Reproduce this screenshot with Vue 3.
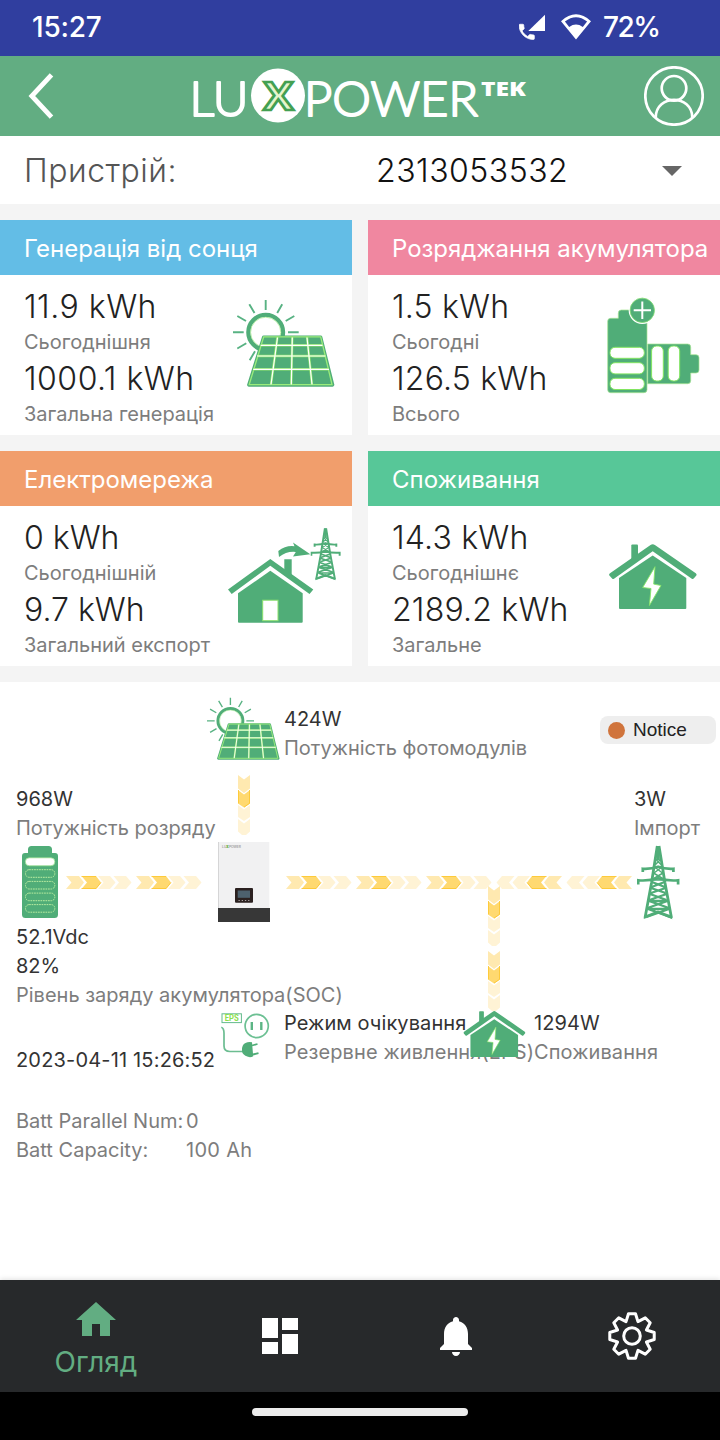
<script setup>
const device = '2313053532'

const cards = [
  {
    id: 'solar',
    title: 'Генерація від сонця',
    today: '11.9 kWh',
    todayLabel: 'Сьогоднішня',
    total: '1000.1 kWh',
    totalLabel: 'Загальна генерація',
  },
  {
    id: 'battery',
    title: 'Розряджання акумулятора',
    today: '1.5 kWh',
    todayLabel: 'Сьогодні',
    total: '126.5 kWh',
    totalLabel: 'Всього',
  },
  {
    id: 'grid',
    title: 'Електромережа',
    today: '0 kWh',
    todayLabel: 'Сьогоднішній',
    total: '9.7 kWh',
    totalLabel: 'Загальний експорт',
  },
  {
    id: 'load',
    title: 'Споживання',
    today: '14.3 kWh',
    todayLabel: 'Сьогоднішнє',
    total: '2189.2 kWh',
    totalLabel: 'Загальне',
  },
]

const viewBoxes = {
  solar: '0 0 102 88',
  battery: '0 0 93 97',
  grid: '0 0 113 97',
  load: '0 0 88 65',
}

// energy flow strips, origin is the top left corner of the diagram
const flows = [
  { x: 66, y: 194, kind: 'right' },
  { x: 136, y: 194, kind: 'right' },
  { x: 286, y: 194, kind: 'right' },
  { x: 356, y: 194, kind: 'right' },
  { x: 426, y: 194, kind: 'right' },
  { x: 496, y: 194, kind: 'left' },
  { x: 566, y: 194, kind: 'left' },
  { x: 238, y: 93, kind: 'down' },
  { x: 488, y: 204, kind: 'down' },
  { x: 488, y: 269, kind: 'down' },
]

const gear = Array.from({ length: 8 }, (_, i) => [[-9, 22.5], [9, 22.5], [22.5, 15.6]]
  .map(([deg, r]) => {
    const a = (i * 45 + deg) * Math.PI / 180
    return `${(24 + r * Math.sin(a)).toFixed(2)},${(24 - r * Math.cos(a)).toFixed(2)}`
  })
  .join(' ')).join(' ')
</script>

<template>
  <div class="screen">
    <svg class="defs" width="0" height="0">
      <symbol id="i-solar" viewBox="0 0 102 88">
        <circle cx="32.7" cy="33.3" r="17.4" fill="none" stroke="#50ad78" stroke-width="4.2" />
        <circle cx="32.7" cy="33.3" r="15.1" fill="none" stroke="#a5e88b" stroke-width=".7" />
        <path
          d="M32.7 1v10M16.3 5.3l5.2 8.7M49.2 5.3L44.2 14M4.3 17l8.7 5M61.3 17l-8.6 5M0 33.3h10.7M55 33.3h10.7M4.3 49.5l9-5.3M16.7 61.2l5.3-9"
          fill="none" stroke="#58b283" stroke-width="1.9"
        />
        <path d="M30.7 36.5h57a1.8 1.8 0 0 1 1.6 1.3l11.8 47a2 2 0 0 1-2 2.9H16a2 2 0 0 1-1.6-3l14.6-47a2 2 0 0 1 1.7-1.2z" fill="#50ad78" />
        <path d="M30.7 37.8h57L99 85.600H16.2z" fill="none" stroke="#9aec7b" stroke-width="1.3" />
        <g fill="none" stroke="#8fe66c" stroke-width="2.4">
          <path d="M27.7 46.3h61.8M24 57h68.5M20.2 70.3h75.8M44.5 37.5L38 85.5M59.3 37.5l-1 48M74 37.5l5 48" />
        </g>
        <g fill="none" stroke="#fff" stroke-width="1.2">
          <path d="M27.7 46.3h61.8M24 57h68.5M20.2 70.3h75.8M44.5 38.5L38 85.5M59.3 38.5l-1 47M74 38.5l5 47" />
        </g>
      </symbol>

      <symbol id="i-battery" viewBox="0 0 93 97">
        <path d="M3.7 21.3h7.6V16a3 3 0 0 1 3-3H27v8.3h10a3 3 0 0 1 3 3v68.4a3 3 0 0 1-3 3H3.7a3 3 0 0 1-3-3V24.3a3 3 0 0 1 3-3z" fill="#50ad78" stroke="#a7e593" stroke-width=".7" />
        <path d="M40.7 47h40a3 3 0 0 1 3 3v7.7h5.3a3 3 0 0 1 3 3V73a3 3 0 0 1-3 3h-5.3v7.7a3 3 0 0 1-3 3h-40z" fill="#50ad78" stroke="#a7e593" stroke-width=".7" />
        <g fill="#fff" stroke="#82e560" stroke-width="1">
          <rect x="3" y="50.3" width="34.3" height="11" rx="5" />
          <rect x="3" y="65.7" width="34.3" height="11.2" rx="5" />
          <rect x="3" y="81.3" width="34.3" height="11.2" rx="5" />
          <rect x="44.6" y="49" width="11.7" height="35" rx="5" />
          <rect x="61.2" y="49" width="11.5" height="35" rx="5" />
        </g>
        <circle cx="35.3" cy="13.3" r="12.9" fill="#50ad78" stroke="#fff" stroke-width="1.5" />
        <circle cx="35.3" cy="13.3" r="12.2" fill="none" stroke="#80dc70" stroke-width=".8" />
        <path d="M26.7 13.3h17.3M35.3 4.6v17.3" stroke="#fff" stroke-width="2" />
      </symbol>

      <symbol id="i-tower" viewBox="0 0 43 75">
        <g fill="none" stroke="#50ad78">
          <path d="M20.3 1L14.5 38 8 73M22 1l6 37 6.5 35" stroke-width="2.8" />
          <path d="M21.1 1v14" stroke-width="3.4" />
          <path d="M5.8 27v-3.2q8 .5 15.3-2 7.3 2.5 15.3 2V27M1.2 39.5v-4.2q11 .8 19.9-2 8.9 2.8 20 2v4.2" stroke-width="2.7" />
          <path d="M18.5 14l6 6M24 14l-6 6M17.5 22l8 6M25 22l-8 6M16.5 28l10 6M26 28l-10 6M15 35h12.5" stroke-width="1.5" />
          <path
            d="M15 37l12.8 5M27.5 37l-12.8 5M14 43l14.6 5M28.5 43L14 48M13 49l16.5 6M29.5 49L12.5 55M12 56h18.5M12 56l20 7M30.5 56l-20 7M11 64h21M11 64l22 8M32 64L9.5 72"
            stroke-width="2.3"
          />
        </g>
        <path d="M6.7 74l.8-3.5 4.5-1.5 9-3.5 9.2 3.5 4.3 1.5.8 3.8-14.3-6z" fill="#50ad78" />
      </symbol>

      <symbol id="i-grid" viewBox="0 0 113 97">
        <path d="M56.3 32.3h7.4v17l-7.4-5z" fill="#50ad78" />
        <path d="M0 62.5L42.3 32l43 30.5-3.8 4.6L42.3 38.8 3.7 67.1z" fill="#50ad78" />
        <path d="M10 66.3L42.3 43.8l32.4 22.5v28.4a1 1 0 0 1-1 1H11a1 1 0 0 1-1-1z" fill="#50ad78" />
        <rect x="34.7" y="73.2" width="15.3" height="20.5" fill="#fff" stroke="#8be26d" stroke-width="1" />
        <path d="M50.3 24Q58 18 66.5 19.2L65 15.5l17.3 11.8-17.3 2.2 2.8-4.6q-9-1-16.8 5.2z" fill="#50ad78" />
        <svg x="82.5" y="0.5" width="30.5" height="53.5" viewBox="0 0 43 75">
          <use href="#i-tower" width="43" height="75" />
        </svg>
      </symbol>

      <symbol id="i-load" viewBox="0 0 88 65">
        <path d="M22.3 1.5a1 1 0 0 1 1-1H28a1 1 0 0 1 1 1V12l-6.7 5z" fill="#50ad78" />
        <path d="M.6 31.7Q-.6 30.5 1 29.3L41.5.9q2.2-1.5 4.4 0L86.8 29.3q1.4 1.2.3 2.5l-2.4 2.8q-.8.7-1.9.1L43.7 7.3 5 34.7q-1 .7-1.9-.2z" fill="#50ad78" />
        <path d="M10 34L43.7 11.5 77.3 34v30a1 1 0 0 1-1 1H11a1 1 0 0 1-1-1z" fill="#50ad78" />
        <path d="M46 22.7L33.7 43.5l8.3 1-1.6 17L52 41.5l-7.3-1.4z" fill="#fff" stroke="#86e468" stroke-width=".9" />
      </symbol>

      <symbol id="i-flow-right" viewBox="0 .5 66 13">
        <path d="M0 .5h13l5 6.5-5 6.5H0L5.5 7z" fill="#ffe9b0" />
        <path d="M15.5.5H30L35 7l-5 6.5H15.5L21 7z" fill="#ffd970" />
        <path d="M15.5.9H30M15.5 13.1H30L35 7" fill="none" stroke="#fdc62f" stroke-width=".9" />
        <path d="M32 .5H44L49.5 7l-5.5 6.5H32L37.5 7zM47.5.5H60L65.5 7 60 13.5H47.5L53 7z" fill="#fff3d5" />
      </symbol>

      <symbol id="i-flow-down" viewBox="0 0 12 61">
        <path d="M0 0l6 4.5L12 0v13.5l-6 4.5-6-4.5z" fill="#ffe9b0" />
        <path d="M0 15l6 4.5 6-4.5v13.5L6 32.5l-6-4z" fill="#ffd970" />
        <path d="M.4 15v13.3M11.6 15v13.3L6 32.2" fill="none" stroke="#fdc62f" stroke-width=".9" />
        <path d="M0 30l6 4.5 6-4.5v12l-6 4-6-4zM0 44l6 4.5 6-4.5v12.5L8 60H4l-4-3.5z" fill="#fff3d5" />
      </symbol>
    </svg>

    <div class="status-bar">
      <span class="clock">15:27</span>
      <svg class="signal" width="27" height="26" viewBox="0 0 27 26" fill="#fff">
        <path d="M26 .7V17H9.300z" />
        <path stroke="#fff" stroke-width=".8" transform="translate(-2.5 7.7) scale(.85)" d="M6.62 10.79c1.44 2.83 3.76 5.14 6.59 6.59l2.2-2.2c.27-.27.67-.36 1.02-.24 1.12.37 2.33.57 3.57.57.55 0 1 .45 1 1V20c0 .55-.45 1-1 1-9.39 0-17-7.61-17-17 0-.55.45-1 1-1h3.5c.55 0 1 .45 1 1 0 1.25.2 2.45.57 3.57.11.35.03.74-.25 1.02l-2.2 2.2z" />
      </svg>
      <svg class="wifi" width="30" height="26" viewBox="0 0 30 26">
        <path fill="#fff" fill-rule="evenodd" d="M0 7.2Q15-6.5 30 7.2L15 25.5zM3.9 7.6l4.3 5.3Q15 8 21.8 12.9l4.3-5.3Q15-1.2 3.9 7.6z" />
      </svg>
      <span class="charge">72%</span>
    </div>

    <header class="app-bar">
      <svg width="26" height="46" viewBox="0 0 26 46">
        <path d="M23.5 1.8L3.8 23l19.7 21.2" fill="none" stroke="#fff" stroke-width="4.8" />
      </svg>
      <svg class="brand" width="340" height="60" viewBox="0 0 340 60">
        <g class="brand-name">
          <text x="-.5" y="50" textLength="59" lengthAdjust="spacingAndGlyphs">LU</text>
          <text x="114" y="50" textLength="174" lengthAdjust="spacingAndGlyphs">POWER</text>
        </g>
        <circle cx="88" cy="29.5" r="27" fill="#fff" />
        <text x="73.500" y="43.700" class="brand-x" textLength="30" lengthAdjust="spacingAndGlyphs">X</text>
        <text x="291" y="29.500" class="brand-tek" textLength="45" lengthAdjust="spacingAndGlyphs">TEK</text>
      </svg>
      <svg width="60" height="60" viewBox="0 0 60 60" fill="none" stroke="#fff" stroke-width="2.7">
        <circle cx="30" cy="30" r="28.7" />
        <circle cx="30" cy="22.3" r="12.3" />
        <path d="M11.7 51.5C12 28 48 28 48.3 51.5" />
      </svg>
    </header>

    <div class="device">
      <span class="device-label">Пристрій:</span>
      <span class="device-id">{{ device }}</span>
      <span class="caret"></span>
    </div>

    <section class="cards">
      <article v-for="c in cards" :key="c.id" class="card" :class="c.id">
        <h2 class="card-title">{{ c.title }}</h2>
        <div class="card-body">
          <div class="stats">
            <div class="value">{{ c.today }}</div>
            <div class="label">{{ c.todayLabel }}</div>
            <div class="value">{{ c.total }}</div>
            <div class="label">{{ c.totalLabel }}</div>
          </div>
          <svg class="card-icon" :viewBox="viewBoxes[c.id]">
            <use :href="`#i-${c.id}`" />
          </svg>
        </div>
      </article>
    </section>

    <main class="diagram">
      <svg
        v-for="(f, i) in flows" :key="i" class="flow" :class="f.kind"
        :style="{ left: f.x + 'px', top: f.y + 'px' }"
      >
        <use :href="f.kind === 'down' ? '#i-flow-down' : '#i-flow-right'" />
      </svg>

      <svg class="node n-solar" viewBox="0 0 102 88"><use href="#i-solar" /></svg>
      <div class="node t-solar">
        <b>424W</b>
        <span>Потужність фотомодулів</span>
      </div>

      <div class="node notice"><i></i>Notice</div>

      <div class="node t-discharge">
        <b>968W</b>
        <span>Потужність розряду</span>
      </div>
      <svg class="node n-battery" width="36" height="72" viewBox="0 0 36 72">
        <path d="M3 7h3V3.5A3.5 3.5 0 0 1 9.500 0h17A3.500 3.500 0 0 1 30 3.500V7h3a3 3 0 0 1 3 3v58.500a3.500 3.500 0 0 1-3.500 3.500h-29A3.500 3.500 0 0 1 0 68.500V10a3 3 0 0 1 3-3z" fill="#50ad78" />
        <rect x="3.3" y="11.8" width="29.6" height="8" rx="4" fill="#fff" stroke="#8fdd85" stroke-width=".7" />
        <g fill="none" stroke="#b9eca0" stroke-width="1" stroke-dasharray="1.7 .8">
          <rect x="3.5" y="23.7" width="29.3" height="7.6" rx="3.6" />
          <rect x="3.5" y="35.4" width="29.3" height="7.6" rx="3.6" />
          <rect x="3.5" y="47.1" width="29.3" height="7.6" rx="3.6" />
          <rect x="3.5" y="58.6" width="29.3" height="7.6" rx="3.6" />
        </g>
      </svg>

      <svg class="node n-inverter" width="52" height="80" viewBox="0 0 52 80">
        <rect width="51.3" height="67" fill="#f1f1f2" />
        <rect width=".8" height="67" fill="#cfcfcf" />
        <text x="4" y="5.8" font-family="Inter, sans-serif" font-size="3.6" fill="#777" textLength="19" lengthAdjust="spacingAndGlyphs">LU<tspan fill="#55a91c" font-weight="800">X</tspan>POWER</text>
        <rect y="66" width="52" height="14" fill="#373737" />
        <rect x="17" y="46" width="18" height="14.7" rx="1" fill="#2b2120" />
        <rect x="19.7" y="48.5" width="12.3" height="7.3" fill="#4d616e" />
        <path d="M20.5 58.5h11" stroke="#a9a0a0" stroke-width="1.2" stroke-dasharray="1.3 1.9" />
      </svg>

      <div class="node t-import">
        <b>3W</b>
        <span>Імпорт</span>
      </div>
      <svg class="node n-tower" viewBox="0 0 43 75"><use href="#i-tower" /></svg>

      <div class="node t-soc">
        <b>52.1Vdc</b>
        <b>82%</b>
        <span>Рівень заряду акумулятора(SOC)</span>
      </div>

      <svg class="node n-eps" width="52" height="48" viewBox="0 0 52 48">
        <rect x="2" y="1.8" width="19.4" height="8.8" fill="none" stroke="#63bb8c" stroke-width="1" />
        <text x="4.8" y="9.2" font-family="Roboto, sans-serif" font-size="8.5" font-weight="700" fill="#8be04e" textLength="14" lengthAdjust="spacingAndGlyphs">EPS</text>
        <circle cx="36.7" cy="14" r="11.6" fill="none" stroke="#6cc093" stroke-width="1.7" />
        <path d="M31.8 10v8M41.3 10v8" stroke="#5cb585" stroke-width="2.4" />
        <path d="M1.3 15.3q2.7 1 2.7 6V34q0 5.5 6 5.5h13" fill="none" stroke="#6cbd91" stroke-width="1.7" />
        <path d="M22 38.5q-.3-6 3.5-7.5 3-1.7 6.5-.8l1.2 14q-2.5 1.5-5.2.6Q22 43 22 38.5z" fill="#50ad78" />
        <path d="M32 33.5l5.5-1.5M33 42.5l5.5-1.3" stroke="#50ad78" stroke-width="1.8" />
      </svg>
      <div class="node t-eps">
        <b>Режим очікування</b>
        <span>Резервне живлення(EPS)</span>
      </div>

      <svg class="node n-load" viewBox="0 0 88 65"><use href="#i-load" /></svg>
      <div class="node t-load">
        <b>1294W</b>
        <span>Споживання</span>
      </div>

      <div class="node t-time"><b>2023-04-11 15:26:52</b></div>

      <dl class="node t-batt">
        <dt>Batt Parallel Num:</dt>
        <dd>0</dd>
        <dt>Batt Capacity:</dt>
        <dd>100 Ah</dd>
      </dl>
    </main>

    <nav class="tabs">
      <button class="tab active">
        <svg width="40" height="34" viewBox="0 0 40 34" fill="currentColor">
          <path d="M20 0l20 18h-6v16H24V22h-8v12H6V18H0z" />
        </svg>
        <span>Огляд</span>
      </button>
      <button class="tab">
        <svg width="48" height="48" viewBox="0 0 24 24" fill="currentColor">
          <path d="M3 13h8V3H3zm0 8h8v-6H3zm10 0h8V11h-8zm0-18v6h8V3z" />
        </svg>
      </button>
      <button class="tab">
        <svg width="48" height="48" viewBox="0 0 24 24" fill="currentColor">
          <path d="M12 22c1.1 0 2-.9 2-2h-4c0 1.1.89 2 2 2zm6-6v-5c0-3.07-1.64-5.64-4.5-6.32V4c0-.83-.67-1.5-1.5-1.5s-1.5.67-1.5 1.5v.68C7.63 5.36 6 7.92 6 11v5l-2 2v1h16v-1l-2-2z" />
        </svg>
      </button>
      <button class="tab">
        <svg width="48" height="48" viewBox="0 0 48 48" fill="none" stroke="currentColor" stroke-width="3">
          <polygon :points="gear" stroke-linejoin="round" />
          <circle cx="24" cy="24" r="8.3" />
        </svg>
      </button>
    </nav>
    <div class="gesture"><span></span></div>
  </div>
</template>

<style>
body {
  margin: 0;
}
</style>

<style scoped>
.screen {
  display: flex;
  flex-direction: column;
  width: 720px;
  height: 1440px;
  overflow: hidden;
  background: #f4f4f4;
  font-family: Inter, "Noto Sans", sans-serif;
  color: #333;
}
.defs {
  position: absolute;
}

.status-bar {
  display: flex;
  align-items: center;
  height: 56px;
  padding: 0 62px 2px 32px;
  box-sizing: border-box;
  background: #303e9f;
  color: #fff;
  font-size: 28px;
  font-weight: 500;
}
.clock {
  flex: 1;
  letter-spacing: -0.2px;
}
.charge {
  width: 55px;
  letter-spacing: -1.5px;
}
.wifi {
  margin: 0 12px 0 15px;
}

.app-bar {
  display: flex;
  align-items: center;
  height: 80px;
  padding: 0 16px 0 28px;
  box-sizing: border-box;
  background: #62ad82;
}
.brand {
  margin: 0 auto 0 136px;
}
.brand-name {
  font-family: Lato, sans-serif;
  font-size: 47px;
  font-weight: 300;
  fill: #fff;
  stroke: #fff;
  stroke-width: 2;
  stroke-linejoin: round;
}
.brand-x {
  font-family: "Open Sans", sans-serif;
  font-size: 40px;
  font-weight: 700;
  fill: #e6f5cc;
  stroke: #43a052;
  stroke-width: 2.6;
}
.brand-tek {
  font-family: "Open Sans", sans-serif;
  font-size: 20px;
  font-weight: 800;
  fill: #fff;
}

.device {
  display: flex;
  align-items: center;
  height: 68px;
  padding: 0 38px 0 24px;
  box-sizing: border-box;
  background: #fff;
  font-size: 32px;
}
.device-label {
  width: 352px;
  font-weight: 300;
  letter-spacing: 0.5px;
  color: #555;
}
.device-id {
  flex: 1;
  font-weight: 300;
  letter-spacing: 0.5px;
  color: #111;
}
.caret {
  margin-top: 1px;
  border: 10px solid transparent;
  border-top-color: #666;
  border-bottom: 0;
}

.cards {
  display: grid;
  grid-template-columns: 352px 352px;
  gap: 16px;
  padding: 16px 0;
}
.card {
  height: 215px;
  background: #fff;
}
.card-title {
  height: 55px;
  margin: 0;
  padding-left: 24px;
  font-size: 24px;
  font-weight: 400;
  line-height: 57px;
  white-space: nowrap;
  color: #fff;
}
.solar .card-title { background: #63bde6; }
.battery .card-title { background: #f087a0; }
.grid .card-title { background: #f19e6c; }
.load .card-title { background: #57c798; }
.battery .card-title { letter-spacing: -0.05px; }
.card-body {
  display: flex;
  justify-content: space-between;
  height: 160px;
  padding: 14px 0 0 24px;
  box-sizing: border-box;
}
.value {
  font-size: 32px;
  font-weight: 300;
  line-height: 36px;
  letter-spacing: 0.2px;
  color: #222;
}
.label {
  height: 36px;
  font-size: 20px;
  line-height: 34px;
  color: #7d7d7d;
}
.solar .value { letter-spacing: 0.5px; }
.solar .card-icon { width: 102px; height: 88px; margin: 10px 17px 0 0; }
.battery .card-icon { width: 93px; height: 97px; margin: 8px 20px 0 0; }
.grid .card-icon { width: 113px; height: 97px; margin: 7px 11px 0 0; }
.load .card-icon { width: 88px; height: 65px; margin: 24px 23px 0 0; }
.grid .value { letter-spacing: 0; }

.diagram {
  position: relative;
  flex: 1;
  background: #fff;
  font-size: 20px;
  line-height: 29px;
}
.node, .flow {
  position: absolute;
}
.node b, .node span {
  display: block;
  font-weight: 400;
  white-space: nowrap;
}
.node span {
  color: #7d7d7d;
}
.flow { width: 66px; height: 13px; }
.flow.left { transform: scaleX(-1); }
.flow.down { width: 12px; height: 61px; }

.n-solar { left: 207px; top: 15px; width: 73px; height: 63px; }
.t-solar { left: 284px; top: 23px; }
.t-discharge { left: 16px; top: 103px; }
.n-battery { left: 22px; top: 164px; }
.n-inverter { left: 218px; top: 160px; }
.t-import { left: 634px; top: 103px; }
.n-tower { left: 637px; top: 163px; width: 43px; height: 75px; }
.t-soc { left: 16px; top: 241px; }
.n-eps { left: 220px; top: 330px; }
.t-eps { left: 284px; top: 327px; letter-spacing: 0.1px; }
.n-load { left: 463px; top: 329px; width: 63px; height: 46px; }
.t-load { left: 534px; top: 327px; letter-spacing: 0.1px; }
.t-time { left: 16px; top: 364px; letter-spacing: 0.17px; }
.t-batt {
  left: 16px;
  top: 425px;
  display: grid;
  grid-template-columns: 170px auto;
  margin: 0;
  white-space: nowrap;
  color: #7d7d7d;
}
.t-batt dd {
  margin: 0;
  letter-spacing: 0.3px;
}
.notice {
  left: 600px;
  top: 34px;
  display: flex;
  align-items: center;
  gap: 8px;
  width: 116px;
  height: 28px;
  padding-left: 8px;
  box-sizing: border-box;
  border-radius: 8px;
  background: #eee;
  font: 400 19px "Liberation Sans", sans-serif;
  color: #222;
}
.notice i {
  width: 17px;
  height: 17px;
  border-radius: 50%;
  background: #d0743c;
}

.tabs {
  display: flex;
  height: 112px;
  background: #27292b;
  box-shadow: 0 -1px 5px rgba(0, 0, 0, 0.12);
  z-index: 1;
}
.tab {
  display: flex;
  flex: 1;
  flex-direction: column;
  align-items: center;
  justify-content: center;
  gap: 9px;
  padding: 0;
  border: 0;
  background: none;
  font: 400 28px/34px Inter, sans-serif;
  color: #fff;
}
.tab.active {
  flex: 0 0 192px;
  padding-top: 8px;
  color: #62ad82;
}
.gesture {
  display: flex;
  justify-content: center;
  height: 48px;
  padding-top: 16px;
  box-sizing: border-box;
  background: #000;
}
.gesture span {
  width: 216px;
  height: 8px;
  border-radius: 4px;
  background: #ebebeb;
}
</style>
